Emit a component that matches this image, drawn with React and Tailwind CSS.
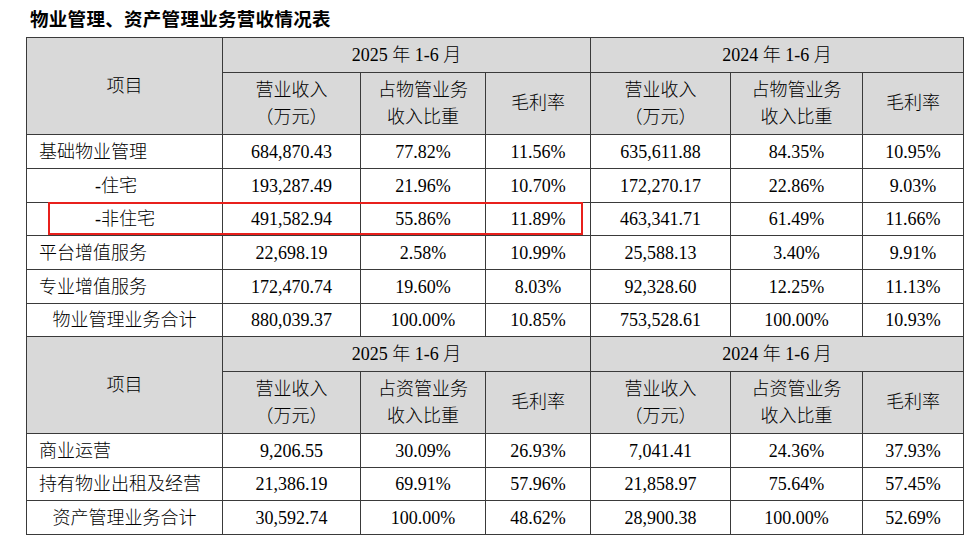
import React from "react";

const F = { fontFamily: '"Liberation Serif", "Noto Sans CJK SC", serif' };

const cellB = "border border-[#3a3a3a]";

function HeaderRows({ share }) {
  return (
    <>
      <tr className="h-[35px] bg-[#d9d9d9]">
        <td rowSpan={2} className={`${cellB} text-center align-middle`}>项目</td>
        <td colSpan={3} className={`${cellB} text-center`}>2025 年 1-6 月</td>
        <td colSpan={3} className={`${cellB} text-center`}>2024 年 1-6 月</td>
      </tr>
      <tr className="h-[62px] bg-[#d9d9d9] leading-[27px]">
        <td className={`${cellB} text-center`}>营业收入<br />（万元）</td>
        <td className={`${cellB} text-center`}>{share}<br />收入比重</td>
        <td className={`${cellB} text-center`}>毛利率</td>
        <td className={`${cellB} text-center`}>营业收入<br />（万元）</td>
        <td className={`${cellB} text-center`}>{share}<br />收入比重</td>
        <td className={`${cellB} text-center`}>毛利率</td>
      </tr>
    </>
  );
}

function DataRow({ label, align, vals, h }) {
  const a =
    align === "center" ? "text-center" : align === "indent" ? "text-left pl-[68px]" : "text-left pl-[12px]";
  return (
    <tr className={h}>
      <td className={`${cellB} ${a}`}>{label}</td>
      {vals.map((v, i) => (
        <td key={i} className={`${cellB} text-center`}>{v}</td>
      ))}
    </tr>
  );
}

function Cols() {
  return (
    <colgroup>
      <col className="w-[196px]" />
      <col className="w-[138px]" />
      <col className="w-[125px]" />
      <col className="w-[105px]" />
      <col className="w-[140px]" />
      <col className="w-[132px]" />
      <col className="w-[101px]" />
    </colgroup>
  );
}

export default function App() {
  return (
    <div className="w-[980px] h-[544px] bg-white relative overflow-hidden text-black" style={F}>
      <div
        className="pl-[30px] pt-[6px] h-[37px] text-[18.5px] font-bold leading-[24px] tracking-[0.3px]"
        style={{ fontFamily: '"Noto Sans CJK SC", sans-serif' }}
      >
        物业管理、资产管理业务营收情况表
      </div>
      <div className="pl-[26px]">
        <table className="border-collapse table-fixed w-[937px] text-[18px] leading-[22px] font-light">
          <Cols />
          <tbody>
            <HeaderRows share="占物管业务" />
            <DataRow h="h-[34px]" label="基础物业管理" vals={["684,870.43", "77.82%", "11.56%", "635,611.88", "84.35%", "10.95%"]} />
            <DataRow h="h-[34px]" label="-住宅" align="indent" vals={["193,287.49", "21.96%", "10.70%", "172,270.17", "22.86%", "9.03%"]} />
            <DataRow h="h-[33px]" label="-非住宅" align="indent" vals={["491,582.94", "55.86%", "11.89%", "463,341.71", "61.49%", "11.66%"]} />
            <DataRow h="h-[34px]" label="平台增值服务" vals={["22,698.19", "2.58%", "10.99%", "25,588.13", "3.40%", "9.91%"]} />
            <DataRow h="h-[34px]" label="专业增值服务" vals={["172,470.74", "19.60%", "8.03%", "92,328.60", "12.25%", "11.13%"]} />
            <DataRow h="h-[33px]" label="物业管理业务合计" align="center" vals={["880,039.37", "100.00%", "10.85%", "753,528.61", "100.00%", "10.93%"]} />
            <HeaderRows share="占资管业务" />
            <DataRow h="h-[34px]" label="商业运营" vals={["9,206.55", "30.09%", "26.93%", "7,041.41", "24.36%", "37.93%"]} />
            <DataRow h="h-[33px]" label="持有物业出租及经营" vals={["21,386.19", "69.91%", "57.96%", "21,858.97", "75.64%", "57.45%"]} />
            <DataRow h="h-[34px]" label="资产管理业务合计" align="center" vals={["30,592.74", "100.00%", "48.62%", "28,900.38", "100.00%", "52.69%"]} />
          </tbody>
        </table>
      </div>
      <div className="absolute left-[48px] top-[202px] w-[535px] h-[33px] border-2 border-[#e8201c] pointer-events-none" />
    </div>
  );
}
